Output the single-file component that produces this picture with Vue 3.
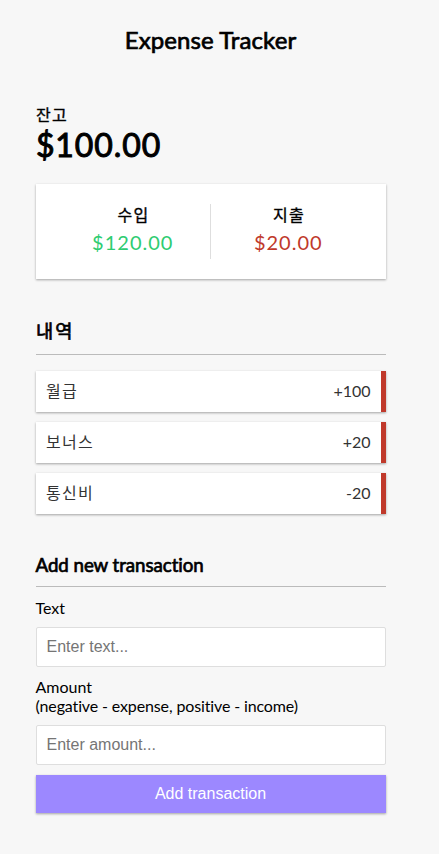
<script setup>
import { ref } from 'vue'

const transactions = ref([
  { id: 1, text: '월급', amount: '+100' },
  { id: 2, text: '보너스', amount: '+20' },
  { id: 3, text: '통신비', amount: '-20' },
])
const text = ref('')
const amount = ref('')
</script>

<template>
  <div class="page">
    <h2 class="title">Expense Tracker</h2>
    <div class="container">
      <h4>잔고</h4>
      <h1>$100.00</h1>
      <div class="summary">
        <div>
          <h4>수입</h4>
          <p class="money plus">$120.00</p>
        </div>
        <div>
          <h4>지출</h4>
          <p class="money minus">$20.00</p>
        </div>
      </div>
      <h3 class="ko">내역</h3>
      <ul class="list">
        <li v-for="t in transactions" :key="t.id">
          <span class="name">{{ t.text }}</span>
          <span>{{ t.amount }}</span>
        </li>
      </ul>
      <h3 class="en">Add new transaction</h3>
      <form @submit.prevent>
        <div class="field">
          <label for="text">Text</label>
          <input id="text" v-model="text" type="text" placeholder="Enter text..." />
        </div>
        <div class="field">
          <label for="amount">Amount<br /><span class="hint">(negative - expense, positive - income)</span></label>
          <input id="amount" v-model="amount" type="text" placeholder="Enter amount..." />
        </div>
        <button class="btn">Add transaction</button>
      </form>
    </div>
  </div>
</template>

<style>
body { margin: 0; background: #f7f7f7; }
</style>

<style scoped>
.page, .page * { box-sizing: border-box; }
.page {
  height: 854px;
  padding-right: 18px;
  display: flex;
  flex-direction: column;
  align-items: center;
  overflow: hidden;
  background: #f7f7f7;
  color: #000;
  font: 16px/19px Lato, "Noto Sans CJK KR", sans-serif;
  font-variant-ligatures: none;
}
h1, h2, h3, h4 { font-weight: 400; -webkit-text-stroke: 0.7px #000; }
.title { margin: 25px 0 0; font-size: 24px; line-height: 29px; letter-spacing: 0.08px; }
.container { width: 350px; margin: 51px 0 0; }
h4 { margin: 0; font-size: 16px; line-height: 19px; letter-spacing: 1.3px; padding-left: 0.5px; -webkit-text-stroke-width: 0.35px; }
h1 { margin: 0 0 18px; font-size: 32px; line-height: 42px; letter-spacing: 0.9px; padding-left: 0.4px; -webkit-text-stroke-width: 1px; }
.summary {
  display: flex;
  height: 95px;
  padding: 20px;
  background: #fff;
  box-shadow: 0 1px 3px rgba(0, 0, 0, 0.12), 0 1px 2px rgba(0, 0, 0, 0.24);
}
.summary > div { flex: 1; text-align: center; height: 55px; }
.summary > div:first-child { border-right: 1px solid #dedede; }
.summary h4 { line-height: 21px; padding-left: 1.5px; }
.money { margin: 3px 0; font-size: 20px; line-height: 29px; letter-spacing: 1px; }
.plus { color: #2ecc71; }
.minus { color: #c0392b; }
h3 { margin: 40px 0 10px; padding-bottom: 10px; border-bottom: 1px solid #bbb; font-size: 18.72px; line-height: 23px; }
.ko { height: 36px; margin-bottom: 16px; padding-left: 0.5px; line-height: 25px; letter-spacing: 2px; }
.en { height: 34px; margin-top: 39px; line-height: 24px; padding-bottom: 9px; letter-spacing: -0.05px; }
.list { list-style: none; margin: 0; padding: 0; }
.list li {
  display: flex;
  justify-content: space-between;
  height: 41px;
  margin-bottom: 10px;
  padding: 10px;
  border-right: 5px solid #c0392b;
  background: #fff;
  color: #333;
  box-shadow: 0 1px 3px rgba(0, 0, 0, 0.12), 0 1px 2px rgba(0, 0, 0, 0.24);
}
.name { padding-left: 0.5px; letter-spacing: 1.3px; }
label { display: block; margin: 10px 0; padding-top: 1px; }
.field + .field label { padding-top: 0; }
.hint { letter-spacing: -0.13px; }
input {
  display: block;
  width: 100%;
  height: 40px;
  padding: 10px;
  border: 1px solid #dedede;
  border-radius: 2px;
  background: #fff;
  font: 16px "Liberation Sans", Arial, sans-serif;
}
.btn {
  display: block;
  width: 100%;
  height: 38px;
  margin: 10px 0 0;
  border: 0;
  background: #9c88ff;
  color: #fff;
  font: 16px "Liberation Sans", Arial, sans-serif;
  box-shadow: 0 1px 3px rgba(0, 0, 0, 0.12), 0 1px 2px rgba(0, 0, 0, 0.24);
}
</style>
